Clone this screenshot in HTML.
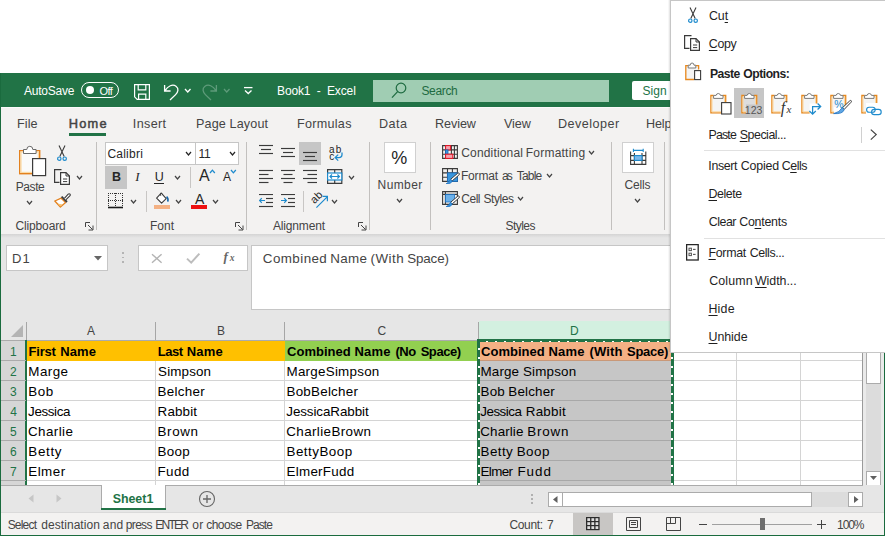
<!DOCTYPE html>
<html lang="en"><head><meta charset="utf-8"><title>Book1 - Excel</title><style>
html,body{margin:0;padding:0;background:#fff;}
body{width:885px;height:536px;overflow:hidden;position:relative;font-family:"Liberation Sans",sans-serif;}
#win,#menu{position:absolute;left:0;top:0;width:885px;height:536px;overflow:hidden;}
div,svg,.t{position:absolute;}
.t{white-space:pre;color:#444;}
u{text-decoration:underline;text-underline-offset:1.5px;text-decoration-thickness:1px;}
</style></head><body>
<div id="win">
<div class="titlebar" style="left:0px;top:73px;width:885px;height:34px;background:#217346;"></div>
<div class="ribbon" style="left:1px;top:107px;width:884px;height:127px;background:#f3f2f1;"></div>
<div style="left:1px;top:107px;width:884px;height:1px;background:#fafafa;"></div>
<div class="fbar" style="left:1px;top:234px;width:884px;height:86px;background:#e6e6e6;"></div>
<div style="left:1px;top:234px;width:884px;height:4px;background:linear-gradient(#d4d4d4,#e6e6e6);"></div>
<span class="t" style="left:23.98px;top:84px;font-size:12px;line-height:14px;letter-spacing:-0.211px;color:#fff;">AutoSave</span>
<div style="left:81px;top:82px;width:38px;height:16px;border:1px solid #fff;border-radius:9px;box-sizing:border-box;"></div>
<div style="left:85.5px;top:86px;width:8px;height:8px;background:#fff;border-radius:50%;"></div>
<span class="t" style="left:99.48px;top:85px;font-size:11px;line-height:12px;letter-spacing:-0.582px;color:#fff;">Off</span>
<span class="t" style="left:277.02px;top:84px;font-size:12px;line-height:14px;letter-spacing:-0.137px;color:#fff;">Book1  -  Excel</span>
<div class="search" style="left:373px;top:80px;width:236px;height:22px;background:#a0cdb3;"></div>
<span class="t" style="left:421.46px;top:84px;font-size:12px;line-height:14px;letter-spacing:-0.339px;color:#1e6b41;">Search</span>
<div style="left:632px;top:81px;width:40px;height:19px;background:#fff;border-radius:2px;"></div>
<span class="t" style="left:642.46px;top:84px;font-size:12px;line-height:14px;letter-spacing:0.102px;color:#217346;">Sign</span>
<svg style="left:134px;top:84px" width="16" height="16" viewBox="0 0 16 16"><path d="M0.6 0.6H15.4V15.4H3.2L0.6 12.8ZM4.2 0.6V5.8H11.8V0.6M4.6 15.4V10.2H11.8V15.4" fill="none" stroke="#fff" stroke-width="1.2"/></svg>
<svg style="left:163px;top:83px" width="17" height="18" viewBox="0 0 17 18"><path d="M1.6 2V8H7.6M2 7.6C5 3 9.5 0.8 13 3.2C16.2 5.6 15 9.2 12.6 11.6L7 17" fill="none" stroke="#fff" stroke-width="1.3"/></svg>
<svg style="left:184px;top:88px" width="7.5" height="5" viewBox="0 0 7.5 5"><path d="M1 1 L3.75 4 L6.5 1" fill="none" stroke="#fff" stroke-width="1.3"/></svg>
<svg style="left:201px;top:83px" width="17" height="18" viewBox="0 0 17 18"><path d="M15.4 2V8H9.4M15 7.6C12 3 7.5 0.8 4 3.2C0.8 5.6 2 9.2 4.4 11.6L10 17" fill="none" stroke="#5e9b7a" stroke-width="1.3"/></svg>
<svg style="left:223px;top:88px" width="7.5" height="5" viewBox="0 0 7.5 5"><path d="M1 1 L3.75 4 L6.5 1" fill="none" stroke="#5e9b7a" stroke-width="1.3"/></svg>
<svg style="left:243px;top:86px" width="11" height="9" viewBox="0 0 11 9"><path d="M1 1.6H9.5" stroke="#fff" stroke-width="1.3"/><path d="M2 4.6L5.25 7.6L8.5 4.6" fill="none" stroke="#fff" stroke-width="1.3"/></svg>
<svg style="left:391px;top:82px" width="16" height="17" viewBox="0 0 16 17"><circle cx="10" cy="6" r="4.8" fill="none" stroke="#1e6b41" stroke-width="1.2"/><path d="M6.6 9.6L1 15.6" stroke="#1e6b41" stroke-width="1.3"/></svg>
<span class="t" style="left:16.97px;top:117px;font-size:12.6px;line-height:14px;letter-spacing:0.097px;">File</span>
<span class="t" style="left:68.65px;top:116px;font-size:12.8px;line-height:15px;letter-spacing:1.258px;-webkit-text-stroke:0.5px #444;">Home</span>
<div style="left:69px;top:133px;width:37px;height:3px;background:#217346;"></div>
<span class="t" style="left:132.84px;top:117px;font-size:12.6px;line-height:14px;letter-spacing:0.349px;">Insert</span>
<span class="t" style="left:195.97px;top:117px;font-size:12.6px;line-height:14px;letter-spacing:0.137px;">Page Layout</span>
<span class="t" style="left:296.97px;top:117px;font-size:12.6px;line-height:14px;letter-spacing:0.283px;">Formulas</span>
<span class="t" style="left:378.97px;top:117px;font-size:12.6px;line-height:14px;letter-spacing:0.473px;">Data</span>
<span class="t" style="left:434.97px;top:117px;font-size:12.6px;line-height:14px;letter-spacing:-0.062px;">Review</span>
<span class="t" style="left:503.94px;top:117px;font-size:12.6px;line-height:14px;letter-spacing:-0.095px;">View</span>
<span class="t" style="left:557.97px;top:117px;font-size:12.6px;line-height:14px;letter-spacing:0.476px;">Developer</span>
<span class="t" style="left:645.97px;top:117px;font-size:12.6px;line-height:14px;letter-spacing:-0.117px;">Help</span>
<div style="left:96px;top:142px;width:1px;height:88px;background:#c2c0be;"></div>
<div style="left:246px;top:142px;width:1px;height:88px;background:#c2c0be;"></div>
<div style="left:369px;top:142px;width:1px;height:88px;background:#c2c0be;"></div>
<div style="left:430px;top:142px;width:1px;height:88px;background:#c2c0be;"></div>
<div style="left:611px;top:142px;width:1px;height:88px;background:#c2c0be;"></div>
<div style="left:664px;top:142px;width:1px;height:88px;background:#c2c0be;"></div>
<span class="t" style="left:15.39px;top:219px;font-size:12px;line-height:14px;letter-spacing:-0.123px;">Clipboard</span>
<span class="t" style="left:150.02px;top:219px;font-size:12px;line-height:14px;letter-spacing:0.020px;">Font</span>
<span class="t" style="left:272.98px;top:219px;font-size:12px;line-height:14px;letter-spacing:-0.156px;">Alignment</span>
<span class="t" style="left:505.46px;top:219px;font-size:12px;line-height:14px;letter-spacing:-0.540px;">Styles</span>
<svg style="left:85px;top:222px" width="9" height="9" viewBox="0 0 9 9"><path d="M0.5 5V0.5H5M3 3L7.5 7.5M8 3.5V8H3.5" fill="none" stroke="#444" stroke-width="1"/></svg>
<svg style="left:235px;top:222px" width="9" height="9" viewBox="0 0 9 9"><path d="M0.5 5V0.5H5M3 3L7.5 7.5M8 3.5V8H3.5" fill="none" stroke="#444" stroke-width="1"/></svg>
<svg style="left:358px;top:222px" width="9" height="9" viewBox="0 0 9 9"><path d="M0.5 5V0.5H5M3 3L7.5 7.5M8 3.5V8H3.5" fill="none" stroke="#444" stroke-width="1"/></svg>
<span class="t" style="left:15.82px;top:180px;font-size:12px;line-height:14px;letter-spacing:-0.442px;">Paste</span>
<svg style="left:26px;top:200px" width="7" height="5" viewBox="0 0 7 5"><path d="M1 1 L3.5 4 L6 1" fill="none" stroke="#444" stroke-width="1.2"/></svg>
<svg style="left:76px;top:175px" width="7" height="5" viewBox="0 0 7 5"><path d="M1 1 L3.5 4 L6 1" fill="none" stroke="#444" stroke-width="1.2"/></svg>
<div style="left:105px;top:142px;width:91px;height:23px;background:#fff;border:1px solid #c6c6c6;box-sizing:border-box;"></div>
<div style="left:195px;top:142px;width:44px;height:23px;background:#fff;border:1px solid #c6c6c6;box-sizing:border-box;"></div>
<span class="t" style="left:107.39px;top:147px;font-size:12px;line-height:14px;letter-spacing:0.235px;color:#262626;">Calibri</span>
<span class="t" style="left:198.59px;top:147px;font-size:12px;line-height:14px;letter-spacing:-0.348px;color:#262626;">11</span>
<svg style="left:185px;top:151px" width="7" height="5" viewBox="0 0 7 5"><path d="M1 1 L3.5 4 L6 1" fill="none" stroke="#262626" stroke-width="1.2"/></svg>
<svg style="left:229px;top:151px" width="7" height="5" viewBox="0 0 7 5"><path d="M1 1 L3.5 4 L6 1" fill="none" stroke="#262626" stroke-width="1.2"/></svg>
<div style="left:105px;top:166px;width:22px;height:23px;background:#c6c6c6;"></div>
<span class="t" style="left:111.96px;top:170px;font-size:12.5px;line-height:14px;font-weight:700;color:#262626;">B</span>
<span class="t" style="left:135.25px;top:169px;font-size:13px;line-height:15px;font-style:italic;color:#262626;font-family:'Liberation Serif',serif;">I</span>
<span class="t" style="left:154.74px;top:170px;font-size:12.5px;line-height:14px;color:#262626;">U</span>
<div style="left:154px;top:183px;width:10px;height:1px;background:#262626;"></div>
<svg style="left:174px;top:175px" width="7" height="5" viewBox="0 0 7 5"><path d="M1 1 L3.5 4 L6 1" fill="none" stroke="#444" stroke-width="1.2"/></svg>
<div style="left:190px;top:167px;width:1px;height:21px;background:#c8c6c4;"></div>
<div style="left:146px;top:191px;width:1px;height:21px;background:#c8c6c4;"></div>
<div style="left:303px;top:191px;width:1px;height:21px;background:#c8c6c4;"></div>
<svg style="left:130px;top:199px" width="7" height="5" viewBox="0 0 7 5"><path d="M1 1 L3.5 4 L6 1" fill="none" stroke="#444" stroke-width="1.2"/></svg>
<svg style="left:175px;top:199px" width="7" height="5" viewBox="0 0 7 5"><path d="M1 1 L3.5 4 L6 1" fill="none" stroke="#444" stroke-width="1.2"/></svg>
<svg style="left:212px;top:199px" width="7" height="5" viewBox="0 0 7 5"><path d="M1 1 L3.5 4 L6 1" fill="none" stroke="#444" stroke-width="1.2"/></svg>
<div style="left:154px;top:205px;width:16px;height:4px;background:#f4b183;"></div>
<div style="left:191px;top:205px;width:16px;height:4px;background:#ee1111;"></div>
<div style="left:299px;top:142px;width:22px;height:23px;background:#c6c6c6;"></div>
<svg style="left:348px;top:175px" width="7" height="5" viewBox="0 0 7 5"><path d="M1 1 L3.5 4 L6 1" fill="none" stroke="#444" stroke-width="1.2"/></svg>
<svg style="left:331px;top:199px" width="7" height="5" viewBox="0 0 7 5"><path d="M1 1 L3.5 4 L6 1" fill="none" stroke="#444" stroke-width="1.2"/></svg>
<div style="left:384px;top:142px;width:32px;height:31px;background:#fff;border:1px solid #d0d0d0;box-sizing:border-box;"></div>
<span class="t" style="left:391.36px;top:148px;font-size:18px;line-height:20px;color:#262626;">%</span>
<span class="t" style="left:377.62px;top:178px;font-size:12px;line-height:14px;letter-spacing:0.381px;">Number</span>
<svg style="left:396px;top:198px" width="7" height="5" viewBox="0 0 7 5"><path d="M1 1 L3.5 4 L6 1" fill="none" stroke="#444" stroke-width="1.2"/></svg>
<span class="tw"><span class="t" style="left:461.29px;top:146px;font-size:12px;line-height:14px;letter-spacing:0.157px;">Conditional</span><span class="t" style="left:525.82px;top:146px;font-size:12px;line-height:14px;letter-spacing:0.212px;">Formatting</span></span>
<span class="tw"><span class="t" style="left:460.92px;top:169px;font-size:12px;line-height:14px;letter-spacing:-0.166px;">Format</span><span class="t" style="left:502.09px;top:169px;font-size:12px;line-height:14px;letter-spacing:-1.930px;">as</span><span class="t" style="left:516.73px;top:169px;font-size:12px;line-height:14px;letter-spacing:-0.804px;">Table</span></span>
<span class="tw"><span class="t" style="left:461.29px;top:192px;font-size:12px;line-height:14px;letter-spacing:-0.487px;">Cell</span><span class="t" style="left:483.46px;top:192px;font-size:12px;line-height:14px;letter-spacing:-0.420px;">Styles</span></span>
<svg style="left:588px;top:150px" width="7" height="5" viewBox="0 0 7 5"><path d="M1 1 L3.5 4 L6 1" fill="none" stroke="#444" stroke-width="1.2"/></svg>
<svg style="left:546px;top:173px" width="7" height="5" viewBox="0 0 7 5"><path d="M1 1 L3.5 4 L6 1" fill="none" stroke="#444" stroke-width="1.2"/></svg>
<svg style="left:517px;top:196px" width="7" height="5" viewBox="0 0 7 5"><path d="M1 1 L3.5 4 L6 1" fill="none" stroke="#444" stroke-width="1.2"/></svg>
<div style="left:622px;top:142px;width:32px;height:31px;background:#fff;border:1px solid #d0d0d0;box-sizing:border-box;"></div>
<span class="t" style="left:624.39px;top:178px;font-size:12px;line-height:14px;letter-spacing:-0.157px;">Cells</span>
<svg style="left:634px;top:198px" width="7" height="5" viewBox="0 0 7 5"><path d="M1 1 L3.5 4 L6 1" fill="none" stroke="#444" stroke-width="1.2"/></svg>
<svg style="left:18px;top:145px" width="30" height="32" viewBox="0 0 30 32"><rect x="1.7" y="5.7" width="20" height="23" fill="#fafafa" stroke="#e3811e" stroke-width="1.4"/><rect x="3" y="7" width="17.4" height="20.4" fill="none" stroke="#fbd9a3" stroke-width="1.2"/><path d="M5.5 8.5V4.5H8.8A3 3.2 0 0 1 14.8 4.5H18.1V8.5Z" fill="#fff" stroke="#6a6a6a" stroke-width="1"/><rect x="14.6" y="13.6" width="13" height="17" fill="#fff" stroke="#3b3b3b" stroke-width="1.2"/></svg>
<svg style="left:56px;top:145px" width="12" height="17" viewBox="0 0 12 17"><path d="M3 0.5L8.2 11.6M9 0.5L3.8 11.6" stroke="#3b3b3b" stroke-width="1.1" fill="none"/><circle cx="3.3" cy="13.7" r="1.7" fill="none" stroke="#1e8bcd" stroke-width="1.2"/><circle cx="8.7" cy="13.7" r="1.7" fill="none" stroke="#1e8bcd" stroke-width="1.2"/></svg>
<svg style="left:54px;top:169px" width="17" height="16" viewBox="0 0 17 16"><path d="M7.5 0.6H0.6V13.4H5.5" fill="none" stroke="#3b3b3b" stroke-width="1.2"/><path d="M6.6 3.6H12L15.4 7V15.4H6.6Z" fill="#fff" stroke="#3b3b3b" stroke-width="1.2"/><path d="M12 3.6V7H15.4M9 10H13.2M9 12.6H13.2" fill="none" stroke="#3b3b3b" stroke-width="1"/></svg>
<svg style="left:54px;top:192px" width="17" height="16" viewBox="0 0 17 16"><path d="M7.2 6.2L11.6 10.6L6.4 15L0.8 9Z" fill="#fff" stroke="#e3811e" stroke-width="1.3" stroke-linejoin="round"/><path d="M3.5 11.5L6.4 14.4L8.6 12.4Z" fill="#f9c470"/><path d="M7.6 4.6L13 10" stroke="#3b3b3b" stroke-width="1.8"/><path d="M10.4 6.4L14.2 2.2Q15.2 1.2 16 2.2Q16.6 3 15.8 3.8L11.8 7.8" fill="#fff" stroke="#3b3b3b" stroke-width="1.1"/></svg>
<span class="t" style="left:198.97px;top:167px;font-size:16px;line-height:17px;color:#262626;">A</span>
<svg style="left:209px;top:169px" width="7" height="5" viewBox="0 0 7 5"><path d="M1 4L3.4 1.2L5.8 4" fill="none" stroke="#1e8bcd" stroke-width="1.3"/></svg>
<span class="t" style="left:222.98px;top:170px;font-size:12px;line-height:14px;color:#262626;">A</span>
<svg style="left:230px;top:169px" width="7" height="5" viewBox="0 0 7 5"><path d="M1 1L3.4 3.8L5.8 1" fill="none" stroke="#1e8bcd" stroke-width="1.3"/></svg>
<svg style="left:108px;top:192px" width="16" height="17" viewBox="0 0 16 17"><path d="M0 1.5H15M0 8.5H15M0.5 1V15M7.5 1V15M14.5 1V15" fill="none" stroke="#333" stroke-width="1" stroke-dasharray="1 1" shape-rendering="crispEdges"/><path d="M0 15.5H15" stroke="#1a1a1a" stroke-width="1.6"/></svg>
<svg style="left:155px;top:192px" width="15" height="13" viewBox="0 0 15 13"><path d="M6.2 1.2L1.6 6.2L6.6 11.2L11.2 6.6L7.4 2.4Q6.6 0.6 5.6 1.4Q4.8 2.2 6 3.6" fill="#fff" stroke="#3b3b3b" stroke-width="1.1" stroke-linejoin="round"/><path d="M11.6 4.6Q13.6 6.4 12.8 9.6" fill="none" stroke="#1565a8" stroke-width="1.6"/></svg>
<span class="t" style="left:194.97px;top:190.5px;font-size:14px;line-height:16px;color:#262626;">A</span>
<svg style="left:259px;top:144px" width="14" height="11" viewBox="0 0 14 11"><path d="M0 1.5H14" stroke="#3b3b3b" stroke-width="1.15"/><path d="M2 5.5H12" stroke="#3b3b3b" stroke-width="1.15"/><path d="M0 9.5H14" stroke="#3b3b3b" stroke-width="1.15"/></svg>
<svg style="left:281px;top:147px" width="14" height="11" viewBox="0 0 14 11"><path d="M0 1.5H14" stroke="#3b3b3b" stroke-width="1.15"/><path d="M2 5.5H12" stroke="#3b3b3b" stroke-width="1.15"/><path d="M0 9.5H14" stroke="#3b3b3b" stroke-width="1.15"/></svg>
<svg style="left:303px;top:151px" width="14" height="11" viewBox="0 0 14 11"><path d="M0 1.5H14" stroke="#3b3b3b" stroke-width="1.15"/><path d="M2 5.5H12" stroke="#3b3b3b" stroke-width="1.15"/><path d="M0 9.5H14" stroke="#3b3b3b" stroke-width="1.15"/></svg>
<svg style="left:259px;top:169px" width="14" height="15" viewBox="0 0 14 15"><path d="M0 1.5H14" stroke="#3b3b3b" stroke-width="1.15"/><path d="M0 5.5H9.5" stroke="#3b3b3b" stroke-width="1.15"/><path d="M0 9.5H14" stroke="#3b3b3b" stroke-width="1.15"/><path d="M0 13.5H9.5" stroke="#3b3b3b" stroke-width="1.15"/></svg>
<svg style="left:281px;top:169px" width="14" height="15" viewBox="0 0 14 15"><path d="M0 1.5H14" stroke="#3b3b3b" stroke-width="1.15"/><path d="M2.5 5.5H11.5" stroke="#3b3b3b" stroke-width="1.15"/><path d="M0 9.5H14" stroke="#3b3b3b" stroke-width="1.15"/><path d="M2.5 13.5H11.5" stroke="#3b3b3b" stroke-width="1.15"/></svg>
<svg style="left:303px;top:169px" width="14" height="15" viewBox="0 0 14 15"><path d="M0 1.5H14" stroke="#3b3b3b" stroke-width="1.15"/><path d="M4.5 5.5H14" stroke="#3b3b3b" stroke-width="1.15"/><path d="M0 9.5H14" stroke="#3b3b3b" stroke-width="1.15"/><path d="M4.5 13.5H14" stroke="#3b3b3b" stroke-width="1.15"/></svg>
<span class="t" style="left:328.98px;top:143.6px;font-size:10px;line-height:11px;letter-spacing:1.122px;color:#262626;">ab</span>
<span class="t" style="left:329.18px;top:151.2px;font-size:10px;line-height:11px;color:#262626;">c</span>
<svg style="left:334px;top:152px" width="10" height="10" viewBox="0 0 10 10"><path d="M8 0.5V2.5Q8 5.6 4.8 5.6H1.4M4.2 2.6L1.2 5.6L4.2 8.6" fill="none" stroke="#1e8bcd" stroke-width="1.3"/></svg>
<svg style="left:327px;top:169px" width="16" height="15" viewBox="0 0 16 15"><path d="M0.6 0.6H14.8V14.4H0.6ZM7.7 0.6V4M7.7 11V14.4" fill="none" stroke="#3b3b3b" stroke-width="1.2"/><rect x="0.6" y="4" width="14.2" height="7" fill="#fff" stroke="#1e8bcd" stroke-width="1.2"/><path d="M3 7.5H12.4M5 5.5L3 7.5L5 9.5M10.4 5.5L12.4 7.5L10.4 9.5" fill="none" stroke="#1e8bcd" stroke-width="1.2"/></svg>
<svg style="left:259px;top:194px" width="14" height="14" viewBox="0 0 14 14"><path d="M0 0.5H14" stroke="#3b3b3b" stroke-width="1.15"/><path d="M7 4.5H14" stroke="#3b3b3b" stroke-width="1.15"/><path d="M7 8.5H14" stroke="#3b3b3b" stroke-width="1.15"/><path d="M0 12.5H14" stroke="#3b3b3b" stroke-width="1.15"/><path d="M0.6 6.5H6M2.8 4.1L0.6 6.5L2.8 8.9" fill="none" stroke="#1e8bcd" stroke-width="1.2"/></svg>
<svg style="left:281px;top:194px" width="14" height="14" viewBox="0 0 14 14"><path d="M0 0.5H14" stroke="#3b3b3b" stroke-width="1.15"/><path d="M7 4.5H14" stroke="#3b3b3b" stroke-width="1.15"/><path d="M7 8.5H14" stroke="#3b3b3b" stroke-width="1.15"/><path d="M0 12.5H14" stroke="#3b3b3b" stroke-width="1.15"/><path d="M0 6.5H5.4M3.2 4.1L5.4 6.5L3.2 8.9" fill="none" stroke="#1e8bcd" stroke-width="1.2"/></svg>
<span class="t" style="left:310px;top:191px;font-size:11px;line-height:12px;color:#262626;transform:rotate(-45deg);transform-origin:50% 50%;">ab</span>
<svg style="left:315px;top:195px" width="14" height="14" viewBox="0 0 14 14"><path d="M1.4 12.6L12.2 1.8M7.6 1.4H12.4V6.2" fill="none" stroke="#1e8bcd" stroke-width="1.2"/></svg>
<svg style="left:442px;top:145px" width="16" height="14" viewBox="0 0 16 14"><path d="M0.6 0.6H15.4V13.4H0.6ZM0.6 4.9H15.4M0.6 9.2H15.4M3.6 0.6V13.4M9.4 0.6V13.4M12.4 0.6V13.4" fill="none" stroke="#3b3b3b" stroke-width="1.1"/><rect x="3.6" y="0.6" width="5" height="4.3" fill="#f4a3ae" stroke="#e81123" stroke-width="1"/><rect x="3.6" y="4.9" width="2.4" height="4.3" fill="#3a96dd" stroke="#0f6cbd" stroke-width="0.8"/><rect x="3.6" y="9.2" width="7.2" height="4.2" fill="#f4a3ae" stroke="#e81123" stroke-width="1"/></svg>
<svg style="left:442px;top:168px" width="18" height="16" viewBox="0 0 18 16"><path d="M0.6 0.6H15.4V13.4H0.6ZM0.6 4.9H15.4M0.6 9.2H15.4M5.5 0.6V13.4M10.4 0.6V13.4" fill="none" stroke="#3b3b3b" stroke-width="1.1"/><rect x="5.5" y="4.9" width="9.9" height="8.5" fill="#3a96dd" stroke="#1b6fbf" stroke-width="0.8"/><g transform="translate(0.8,1.3)"><path d="M14.6 4.2Q15.8 3.2 16.4 4Q17 4.8 16 5.8L9.4 11.6L7.8 10Z" fill="#fff" stroke="#3b3b3b" stroke-width="1"/><path d="M7.8 10L9.4 11.6Q8.6 14.6 3.4 14.4Q6.2 13.2 7.8 10Z" fill="#3a96dd" stroke="#1b6fbf" stroke-width="0.8"/></g></svg>
<svg style="left:442px;top:191px" width="18" height="16" viewBox="0 0 18 16"><path d="M0.6 0.6H15.4V13.4H0.6ZM0.6 3.4H15.4M3.4 0.6V13.4" fill="none" stroke="#3b3b3b" stroke-width="1.1"/><rect x="3.4" y="3.4" width="9" height="7.6" fill="#6cb1ea" stroke="#1b6fbf" stroke-width="0.8"/><g transform="translate(0.8,1.3)"><path d="M14.6 4.2Q15.8 3.2 16.4 4Q17 4.8 16 5.8L9.4 11.6L7.8 10Z" fill="#fff" stroke="#3b3b3b" stroke-width="1"/><path d="M7.8 10L9.4 11.6Q8.6 14.6 3.4 14.4Q6.2 13.2 7.8 10Z" fill="#3a96dd" stroke="#1b6fbf" stroke-width="0.8"/></g></svg>
<svg style="left:630px;top:148px" width="17" height="18" viewBox="0 0 17 18"><path d="M3.4 2.4H13.2M3.4 0.8V4M13.2 0.8V4" fill="none" stroke="#1e8bcd" stroke-width="1.1"/><path d="M0.6 3.4V16.4H15.8V3.4M0.6 7.6H15.8M0.6 12.4H15.8M4.4 5V16.4M12 5V16.4" fill="none" stroke="#3b3b3b" stroke-width="1.1"/><rect x="4.4" y="7.6" width="7.6" height="4.8" fill="#7ab8ec" stroke="#1e8bcd" stroke-width="1.1"/></svg>
<div style="left:6px;top:245px;width:102px;height:26px;background:#fff;border:1px solid #c6c6c6;box-sizing:border-box;"></div>
<span class="t" style="left:11.93px;top:251px;font-size:13px;line-height:15px;letter-spacing:1.083px;">D1</span>
<svg style="left:94px;top:256px" width="8" height="5" viewBox="0 0 8 5"><path d="M0 0H8L4 4.5Z" fill="#666"/></svg>
<div style="left:122.2px;top:252.4px;width:2px;height:1.8px;background:#b4b4b4;"></div>
<div style="left:122.2px;top:256.7px;width:2px;height:1.8px;background:#b4b4b4;"></div>
<div style="left:122.2px;top:261px;width:2px;height:1.8px;background:#b4b4b4;"></div>
<div style="left:138px;top:245px;width:110px;height:26px;background:#fff;border:1px solid #c6c6c6;box-sizing:border-box;"></div>
<svg style="left:151px;top:253px" width="12" height="11" viewBox="0 0 12 11"><path d="M1 1.2L10.6 9.8M10.6 1.2L1 9.8" stroke="#b4b4b4" stroke-width="1.4" fill="none"/></svg>
<svg style="left:186px;top:252px" width="15" height="13" viewBox="0 0 15 13"><path d="M1 6.6L5.2 10.6L13.4 1.6" stroke="#bdbdbd" stroke-width="2" fill="none"/></svg>
<span class="t" style="left:223.60px;top:248.5px;font-size:13px;line-height:15px;font-weight:700;font-style:italic;color:#666;font-family:'Liberation Serif',serif;">f</span>
<span class="t" style="left:229.72px;top:252.8px;font-size:9.5px;line-height:10px;font-weight:700;font-style:italic;color:#666;font-family:'Liberation Serif',serif;">x</span>
<div style="left:251px;top:245px;width:634px;height:65px;background:#fff;border:1px solid #c6c6c6;box-sizing:border-box;"></div>
<span class="tw"><span class="t" style="left:262.82px;top:251px;font-size:13.4px;line-height:15px;letter-spacing:0.424px;">Combined</span><span class="t" style="left:330.20px;top:251px;font-size:13.4px;line-height:15px;letter-spacing:0.317px;">Name</span><span class="t" style="left:370.47px;top:251px;font-size:13.4px;line-height:15px;letter-spacing:0.510px;">(With</span><span class="t" style="left:407.29px;top:251px;font-size:13.4px;line-height:15px;letter-spacing:-0.164px;">Space)</span></span>
<div style="left:1px;top:320px;width:884px;height:20px;background:#e6e6e6;"></div>
<div style="left:479px;top:321px;width:192px;height:19px;background:#d3f0e0;"></div>
<div style="left:1px;top:340px;width:884px;height:1px;background:#ababab;"></div>
<svg style="left:11px;top:325px" width="13" height="13" viewBox="0 0 13 13"><path d="M12 0V12H0Z" fill="#b4b4b4"/></svg>
<div style="left:26px;top:322px;width:1px;height:18px;background:#a6a6a6;"></div>
<div style="left:155px;top:322px;width:1px;height:18px;background:#a6a6a6;"></div>
<div style="left:284px;top:322px;width:1px;height:18px;background:#a6a6a6;"></div>
<div style="left:478px;top:322px;width:1px;height:18px;background:#a6a6a6;"></div>
<span class="t" style="left:86.88px;top:324px;font-size:12px;line-height:14px;">A</span>
<span class="t" style="left:217.02px;top:324px;font-size:12px;line-height:14px;">B</span>
<span class="t" style="left:377.39px;top:324px;font-size:12px;line-height:14px;">C</span>
<span class="t" style="left:570.02px;top:324px;font-size:12px;line-height:14px;color:#217346;">D</span>
<div style="left:27px;top:341px;width:836px;height:144px;background:#fff;"></div>
<div style="left:1px;top:341px;width:25px;height:144px;background:#d6d6d6;"></div>
<div style="left:25px;top:340px;width:2px;height:145px;background:#217346;"></div>
<div style="left:27px;top:341px;width:258px;height:20px;background:#ffc000;"></div>
<div style="left:285px;top:341px;width:192px;height:20px;background:#92d050;"></div>
<div style="left:480px;top:342px;width:191px;height:143px;background:#c6c6c6;"></div>
<div style="left:480px;top:342px;width:191px;height:18px;background:#f4b084;"></div>
<div style="left:480px;top:360px;width:191px;height:1px;background:#c99878;"></div>
<div style="left:1px;top:360px;width:25px;height:1px;background:#ababab;"></div>
<div style="left:674px;top:360px;width:189px;height:1px;background:#d4d4d4;"></div>
<div style="left:1px;top:380px;width:25px;height:1px;background:#ababab;"></div>
<div style="left:27px;top:380px;width:452px;height:1px;background:#d4d4d4;"></div>
<div style="left:480px;top:380px;width:191px;height:1px;background:#a8a8a8;"></div>
<div style="left:674px;top:380px;width:189px;height:1px;background:#d4d4d4;"></div>
<div style="left:1px;top:400px;width:25px;height:1px;background:#ababab;"></div>
<div style="left:27px;top:400px;width:452px;height:1px;background:#d4d4d4;"></div>
<div style="left:480px;top:400px;width:191px;height:1px;background:#a8a8a8;"></div>
<div style="left:674px;top:400px;width:189px;height:1px;background:#d4d4d4;"></div>
<div style="left:1px;top:420px;width:25px;height:1px;background:#ababab;"></div>
<div style="left:27px;top:420px;width:452px;height:1px;background:#d4d4d4;"></div>
<div style="left:480px;top:420px;width:191px;height:1px;background:#a8a8a8;"></div>
<div style="left:674px;top:420px;width:189px;height:1px;background:#d4d4d4;"></div>
<div style="left:1px;top:440px;width:25px;height:1px;background:#ababab;"></div>
<div style="left:27px;top:440px;width:452px;height:1px;background:#d4d4d4;"></div>
<div style="left:480px;top:440px;width:191px;height:1px;background:#a8a8a8;"></div>
<div style="left:674px;top:440px;width:189px;height:1px;background:#d4d4d4;"></div>
<div style="left:1px;top:460px;width:25px;height:1px;background:#ababab;"></div>
<div style="left:27px;top:460px;width:452px;height:1px;background:#d4d4d4;"></div>
<div style="left:480px;top:460px;width:191px;height:1px;background:#a8a8a8;"></div>
<div style="left:674px;top:460px;width:189px;height:1px;background:#d4d4d4;"></div>
<div style="left:1px;top:480px;width:25px;height:1px;background:#ababab;"></div>
<div style="left:27px;top:480px;width:452px;height:1px;background:#d4d4d4;"></div>
<div style="left:480px;top:480px;width:191px;height:1px;background:#a8a8a8;"></div>
<div style="left:674px;top:480px;width:189px;height:1px;background:#d4d4d4;"></div>
<div style="left:155px;top:361px;width:1px;height:124px;background:#d4d4d4;"></div>
<div style="left:284px;top:361px;width:1px;height:124px;background:#d4d4d4;"></div>
<div style="left:736px;top:341px;width:1px;height:144px;background:#d4d4d4;"></div>
<div style="left:800px;top:341px;width:1px;height:144px;background:#d4d4d4;"></div>
<div style="left:862px;top:341px;width:1px;height:144px;background:#9a9a9a;"></div>
<div style="left:477px;top:339px;width:3px;height:146px;background:#217346;"></div>
<div style="left:671px;top:339px;width:3px;height:146px;background:#217346;"></div>
<div style="left:477px;top:339px;width:197px;height:3px;background:#217346;"></div>
<div style="left:478.4px;top:348.4px;width:1.8px;height:1.5px;background:#fff;"></div>
<div style="left:478.4px;top:357.4px;width:1.8px;height:1.5px;background:#fff;"></div>
<div style="left:478.4px;top:366.4px;width:1.8px;height:1.5px;background:#fff;"></div>
<div style="left:478.4px;top:375.4px;width:1.8px;height:1.5px;background:#fff;"></div>
<div style="left:478.4px;top:384.4px;width:1.8px;height:1.5px;background:#fff;"></div>
<div style="left:478.4px;top:393.4px;width:1.8px;height:1.5px;background:#fff;"></div>
<div style="left:478.4px;top:402.4px;width:1.8px;height:1.5px;background:#fff;"></div>
<div style="left:478.4px;top:411.4px;width:1.8px;height:1.5px;background:#fff;"></div>
<div style="left:478.4px;top:420.4px;width:1.8px;height:1.5px;background:#fff;"></div>
<div style="left:478.4px;top:429.4px;width:1.8px;height:1.5px;background:#fff;"></div>
<div style="left:478.4px;top:438.4px;width:1.8px;height:1.5px;background:#fff;"></div>
<div style="left:478.4px;top:447.4px;width:1.8px;height:1.5px;background:#fff;"></div>
<div style="left:478.4px;top:456.4px;width:1.8px;height:1.5px;background:#fff;"></div>
<div style="left:478.4px;top:465.4px;width:1.8px;height:1.5px;background:#fff;"></div>
<div style="left:478.4px;top:474.4px;width:1.8px;height:1.5px;background:#fff;"></div>
<div style="left:478.4px;top:483.4px;width:1.8px;height:1.5px;background:#fff;"></div>
<div style="left:670.8px;top:357.4px;width:1.8px;height:1.5px;background:#fff;"></div>
<div style="left:670.8px;top:366.4px;width:1.8px;height:1.5px;background:#fff;"></div>
<div style="left:670.8px;top:375.4px;width:1.8px;height:1.5px;background:#fff;"></div>
<div style="left:670.8px;top:384.4px;width:1.8px;height:1.5px;background:#fff;"></div>
<div style="left:670.8px;top:393.4px;width:1.8px;height:1.5px;background:#fff;"></div>
<div style="left:670.8px;top:402.4px;width:1.8px;height:1.5px;background:#fff;"></div>
<div style="left:670.8px;top:411.4px;width:1.8px;height:1.5px;background:#fff;"></div>
<div style="left:670.8px;top:420.4px;width:1.8px;height:1.5px;background:#fff;"></div>
<div style="left:670.8px;top:429.4px;width:1.8px;height:1.5px;background:#fff;"></div>
<div style="left:670.8px;top:438.4px;width:1.8px;height:1.5px;background:#fff;"></div>
<div style="left:670.8px;top:447.4px;width:1.8px;height:1.5px;background:#fff;"></div>
<div style="left:670.8px;top:456.4px;width:1.8px;height:1.5px;background:#fff;"></div>
<div style="left:670.8px;top:465.4px;width:1.8px;height:1.5px;background:#fff;"></div>
<div style="left:670.8px;top:474.4px;width:1.8px;height:1.5px;background:#fff;"></div>
<div style="left:670.8px;top:483.4px;width:1.8px;height:1.5px;background:#fff;"></div>
<div style="left:486px;top:340.7px;width:2px;height:1.4px;background:#fff;"></div>
<div style="left:495px;top:340.7px;width:2px;height:1.4px;background:#fff;"></div>
<div style="left:504px;top:340.7px;width:2px;height:1.4px;background:#fff;"></div>
<div style="left:513px;top:340.7px;width:2px;height:1.4px;background:#fff;"></div>
<div style="left:522px;top:340.7px;width:2px;height:1.4px;background:#fff;"></div>
<div style="left:531px;top:340.7px;width:2px;height:1.4px;background:#fff;"></div>
<div style="left:540px;top:340.7px;width:2px;height:1.4px;background:#fff;"></div>
<div style="left:549px;top:340.7px;width:2px;height:1.4px;background:#fff;"></div>
<div style="left:558px;top:340.7px;width:2px;height:1.4px;background:#fff;"></div>
<div style="left:567px;top:340.7px;width:2px;height:1.4px;background:#fff;"></div>
<div style="left:576px;top:340.7px;width:2px;height:1.4px;background:#fff;"></div>
<div style="left:585px;top:340.7px;width:2px;height:1.4px;background:#fff;"></div>
<div style="left:594px;top:340.7px;width:2px;height:1.4px;background:#fff;"></div>
<div style="left:603px;top:340.7px;width:2px;height:1.4px;background:#fff;"></div>
<div style="left:612px;top:340.7px;width:2px;height:1.4px;background:#fff;"></div>
<div style="left:621px;top:340.7px;width:2px;height:1.4px;background:#fff;"></div>
<div style="left:630px;top:340.7px;width:2px;height:1.4px;background:#fff;"></div>
<div style="left:639px;top:340.7px;width:2px;height:1.4px;background:#fff;"></div>
<div style="left:648px;top:340.7px;width:2px;height:1.4px;background:#fff;"></div>
<div style="left:657px;top:340.7px;width:2px;height:1.4px;background:#fff;"></div>
<div style="left:666px;top:340.7px;width:2px;height:1.4px;background:#fff;"></div>
<span class="t" style="left:10.09px;top:345px;font-size:12px;line-height:14px;color:#217346;">1</span>
<span class="t" style="left:9.90px;top:365px;font-size:12px;line-height:14px;color:#217346;">2</span>
<span class="t" style="left:10.04px;top:385px;font-size:12px;line-height:14px;color:#217346;">3</span>
<span class="t" style="left:10.22px;top:405px;font-size:12px;line-height:14px;color:#217346;">4</span>
<span class="t" style="left:10.02px;top:425px;font-size:12px;line-height:14px;color:#217346;">5</span>
<span class="t" style="left:9.89px;top:445px;font-size:12px;line-height:14px;color:#217346;">6</span>
<span class="t" style="left:9.88px;top:465px;font-size:12px;line-height:14px;color:#217346;">7</span>
<span class="tw"><span class="t" style="left:28.53px;top:344px;font-size:13px;line-height:15px;letter-spacing:-0.186px;font-weight:700;color:#000;">First</span><span class="t" style="left:60.13px;top:344px;font-size:13px;line-height:15px;letter-spacing:0.169px;font-weight:700;color:#000;">Name</span></span>
<span class="tw"><span class="t" style="left:157.83px;top:344px;font-size:13px;line-height:15px;letter-spacing:-0.467px;font-weight:700;color:#000;">Last</span><span class="t" style="left:186.73px;top:344px;font-size:13px;line-height:15px;letter-spacing:0.169px;font-weight:700;color:#000;">Name</span></span>
<span class="tw"><span class="t" style="left:287.07px;top:344px;font-size:13px;line-height:15px;letter-spacing:0.005px;font-weight:700;color:#000;">Combined</span><span class="t" style="left:354.53px;top:344px;font-size:13px;line-height:15px;letter-spacing:0.169px;font-weight:700;color:#000;">Name</span><span class="t" style="left:395.45px;top:344px;font-size:13px;line-height:15px;letter-spacing:-0.401px;font-weight:700;color:#000;">(No</span><span class="t" style="left:420.63px;top:344px;font-size:13px;line-height:15px;letter-spacing:-0.422px;font-weight:700;color:#000;">Space)</span></span>
<span class="tw"><span class="t" style="left:481.07px;top:344px;font-size:13px;line-height:15px;letter-spacing:0.005px;font-weight:700;color:#000;">Combined</span><span class="t" style="left:548.53px;top:344px;font-size:13px;line-height:15px;letter-spacing:0.169px;font-weight:700;color:#000;">Name</span><span class="t" style="left:589.45px;top:344px;font-size:13px;line-height:15px;letter-spacing:0.168px;font-weight:700;color:#000;">(With</span><span class="t" style="left:627.03px;top:344px;font-size:13px;line-height:15px;letter-spacing:-0.282px;font-weight:700;color:#000;">Space)</span></span>
<span class="tw"><span class="t" style="left:28.30px;top:364px;font-size:13.4px;line-height:15px;letter-spacing:0.428px;color:#000;">Marge</span></span>
<span class="tw"><span class="t" style="left:158.09px;top:364px;font-size:13.4px;line-height:15px;letter-spacing:0.141px;color:#000;">Simpson</span></span>
<span class="tw"><span class="t" style="left:286.50px;top:364px;font-size:13.4px;line-height:15px;letter-spacing:0.250px;color:#000;">MargeSimpson</span></span>
<span class="tw"><span class="t" style="left:480.50px;top:364px;font-size:13.4px;line-height:15px;letter-spacing:0.153px;color:#000;">Marge</span><span class="t" style="left:522.89px;top:364px;font-size:13.4px;line-height:15px;letter-spacing:0.207px;color:#000;">Simpson</span></span>
<span class="tw"><span class="t" style="left:28.30px;top:384px;font-size:13.4px;line-height:15px;letter-spacing:0.560px;color:#000;">Bob</span></span>
<span class="tw"><span class="t" style="left:157.60px;top:384px;font-size:13.4px;line-height:15px;letter-spacing:0.281px;color:#000;">Belcher</span></span>
<span class="tw"><span class="t" style="left:286.50px;top:384px;font-size:13.4px;line-height:15px;letter-spacing:0.238px;color:#000;">BobBelcher</span></span>
<span class="tw"><span class="t" style="left:480.50px;top:384px;font-size:13.4px;line-height:15px;letter-spacing:0.210px;color:#000;">Bob</span><span class="t" style="left:508.30px;top:384px;font-size:13.4px;line-height:15px;letter-spacing:0.181px;color:#000;">Belcher</span></span>
<span class="tw"><span class="t" style="left:28.09px;top:404px;font-size:13.4px;line-height:15px;letter-spacing:-0.379px;color:#000;">Jessica</span></span>
<span class="tw"><span class="t" style="left:157.60px;top:404px;font-size:13.4px;line-height:15px;letter-spacing:0.153px;color:#000;">Rabbit</span></span>
<span class="tw"><span class="t" style="left:286.29px;top:404px;font-size:13.4px;line-height:15px;letter-spacing:-0.084px;color:#000;">JessicaRabbit</span></span>
<span class="tw"><span class="t" style="left:480.29px;top:404px;font-size:13.4px;line-height:15px;letter-spacing:-0.512px;color:#000;">Jessica</span><span class="t" style="left:525.70px;top:404px;font-size:13.4px;line-height:15px;letter-spacing:0.273px;color:#000;">Rabbit</span></span>
<span class="tw"><span class="t" style="left:28.02px;top:424px;font-size:13.4px;line-height:15px;letter-spacing:0.404px;color:#000;">Charlie</span></span>
<span class="tw"><span class="t" style="left:157.60px;top:424px;font-size:13.4px;line-height:15px;letter-spacing:0.572px;color:#000;">Brown</span></span>
<span class="tw"><span class="t" style="left:286.32px;top:424px;font-size:13.4px;line-height:15px;letter-spacing:0.383px;color:#000;">CharlieBrown</span></span>
<span class="tw"><span class="t" style="left:480.32px;top:424px;font-size:13.4px;line-height:15px;letter-spacing:0.104px;color:#000;">Charlie</span><span class="t" style="left:527.30px;top:424px;font-size:13.4px;line-height:15px;letter-spacing:0.772px;color:#000;">Brown</span></span>
<span class="tw"><span class="t" style="left:28.30px;top:444px;font-size:13.4px;line-height:15px;letter-spacing:0.672px;color:#000;">Betty</span></span>
<span class="tw"><span class="t" style="left:157.60px;top:444px;font-size:13.4px;line-height:15px;letter-spacing:0.289px;color:#000;">Boop</span></span>
<span class="tw"><span class="t" style="left:286.50px;top:444px;font-size:13.4px;line-height:15px;letter-spacing:0.479px;color:#000;">BettyBoop</span></span>
<span class="tw"><span class="t" style="left:480.50px;top:444px;font-size:13.4px;line-height:15px;letter-spacing:0.447px;color:#000;">Betty</span><span class="t" style="left:516.70px;top:444px;font-size:13.4px;line-height:15px;letter-spacing:0.456px;color:#000;">Boop</span></span>
<span class="tw"><span class="t" style="left:28.30px;top:464px;font-size:13.4px;line-height:15px;letter-spacing:0.457px;color:#000;">Elmer</span></span>
<span class="tw"><span class="t" style="left:157.60px;top:464px;font-size:13.4px;line-height:15px;letter-spacing:0.340px;color:#000;">Fudd</span></span>
<span class="tw"><span class="t" style="left:286.50px;top:464px;font-size:13.4px;line-height:15px;letter-spacing:0.279px;color:#000;">ElmerFudd</span></span>
<span class="tw"><span class="t" style="left:480.50px;top:464px;font-size:13.4px;line-height:15px;letter-spacing:-0.618px;color:#000;">Elmer</span><span class="t" style="left:517.40px;top:464px;font-size:13.4px;line-height:15px;letter-spacing:1.007px;color:#000;">Fudd</span></span>
<div style="left:1px;top:485px;width:884px;height:27px;background:#e6e6e6;"></div>
<div style="left:1px;top:485px;width:100px;height:1px;background:#ababab;"></div>
<div style="left:166px;top:485px;width:697px;height:1px;background:#ababab;"></div>
<div style="left:101px;top:485px;width:65px;height:24px;background:#fff;border-left:1px solid #ababab;border-right:1px solid #ababab;box-sizing:border-box;"></div>
<div style="left:101px;top:508px;width:65px;height:2px;background:#217346;"></div>
<span class="t" style="left:112.64px;top:492px;font-size:12.4px;line-height:14px;letter-spacing:0.008px;font-weight:700;color:#217346;">Sheet1</span>
<svg style="left:28px;top:494px" width="6" height="9" viewBox="0 0 6 9"><path d="M5.5 0.5V8.5L0.5 4.5Z" fill="#c6c6c6"/></svg>
<svg style="left:56px;top:494px" width="6" height="9" viewBox="0 0 6 9"><path d="M0.5 0.5V8.5L5.5 4.5Z" fill="#c6c6c6"/></svg>
<svg style="left:198px;top:490px" width="18" height="18" viewBox="0 0 18 18"><circle cx="9" cy="9" r="7.5" fill="none" stroke="#666" stroke-width="1.1"/><path d="M9 5V13M5 9H13" stroke="#666" stroke-width="1.3"/></svg>
<div style="left:863px;top:341px;width:21px;height:144px;background:#eaeaea;"></div>
<div style="left:866px;top:341px;width:15px;height:130px;background:#dcdcdc;"></div>
<div style="left:866px;top:341px;width:15px;height:43px;background:#fff;border:1px solid #ababab;border-top:0;box-sizing:border-box;"></div>
<div style="left:866px;top:471px;width:15px;height:15px;background:#fff;border:1px solid #ababab;box-sizing:border-box;"></div>
<svg style="left:870px;top:476px" width="8" height="5" viewBox="0 0 8 5"><path d="M0 0H7L3.5 4Z" fill="#606060"/></svg>
<div style="left:864px;top:485px;width:20px;height:27px;background:#e6e6e6;"></div>
<div style="left:531px;top:494.4px;width:2px;height:1.8px;background:#b0b0b0;"></div>
<div style="left:531px;top:498.4px;width:2px;height:1.8px;background:#b0b0b0;"></div>
<div style="left:531px;top:502.4px;width:2px;height:1.8px;background:#b0b0b0;"></div>
<div style="left:548px;top:492px;width:315px;height:15px;background:#dcdcdc;"></div>
<div style="left:548px;top:492px;width:15px;height:15px;background:#fff;border:1px solid #ababab;box-sizing:border-box;"></div>
<svg style="left:553px;top:496px" width="5" height="8" viewBox="0 0 5 8"><path d="M4.5 0V7L0 3.5Z" fill="#606060"/></svg>
<div style="left:562px;top:492px;width:250px;height:15px;background:#fff;border:1px solid #ababab;box-sizing:border-box;"></div>
<div style="left:848px;top:492px;width:15px;height:15px;background:#fff;border:1px solid #ababab;box-sizing:border-box;"></div>
<svg style="left:854px;top:496px" width="5" height="8" viewBox="0 0 5 8"><path d="M0 0V7L4.5 3.5Z" fill="#606060"/></svg>
<div style="left:1px;top:512px;width:884px;height:23px;background:#f3f2f1;"></div>
<div style="left:1px;top:512px;width:884px;height:1px;background:#dadada;"></div>
<span class="tw"><span class="t" style="left:7.66px;top:518px;font-size:12px;line-height:14px;letter-spacing:-0.804px;">Select</span><span class="t" style="left:41.30px;top:518px;font-size:12px;line-height:14px;letter-spacing:0.054px;">destination</span><span class="t" style="left:102.69px;top:518px;font-size:12px;line-height:14px;letter-spacing:0.281px;">and</span><span class="t" style="left:125.83px;top:518px;font-size:12px;line-height:14px;letter-spacing:-0.684px;">press</span><span class="t" style="left:155.22px;top:518px;font-size:12px;line-height:14px;letter-spacing:-1.732px;">ENTER</span><span class="t" style="left:192.20px;top:518px;font-size:12px;line-height:14px;letter-spacing:0.333px;">or</span><span class="t" style="left:206.19px;top:518px;font-size:12px;line-height:14px;letter-spacing:-0.550px;">choose</span><span class="t" style="left:246.02px;top:518px;font-size:12px;line-height:14px;letter-spacing:-0.942px;">Paste</span></span>
<span class="tw"><span class="t" style="left:509.39px;top:518px;font-size:12px;line-height:14px;letter-spacing:-0.330px;">Count:</span><span class="t" style="left:546.88px;top:518px;font-size:12px;line-height:14px;">7</span></span>
<div style="left:573px;top:513px;width:40px;height:22px;background:#c8c6c4;"></div>
<svg style="left:586px;top:517px" width="14" height="14" viewBox="0 0 14 14"><rect x="0" y="0" width="13.6" height="13.2" fill="#2b2b2b"/><rect x="1.3" y="1.2" width="2.8" height="2.8" fill="#dedede"/><rect x="1.3" y="5.2" width="2.8" height="2.8" fill="#dedede"/><rect x="1.3" y="9.2" width="2.8" height="2.8" fill="#dedede"/><rect x="5.3999999999999995" y="1.2" width="2.8" height="2.8" fill="#dedede"/><rect x="5.3999999999999995" y="5.2" width="2.8" height="2.8" fill="#dedede"/><rect x="5.3999999999999995" y="9.2" width="2.8" height="2.8" fill="#dedede"/><rect x="9.5" y="1.2" width="2.8" height="2.8" fill="#dedede"/><rect x="9.5" y="5.2" width="2.8" height="2.8" fill="#dedede"/><rect x="9.5" y="9.2" width="2.8" height="2.8" fill="#dedede"/></svg>
<svg style="left:626px;top:517px" width="15" height="14" viewBox="0 0 15 14"><path d="M0.5 0.5H14.5V13.5H0.5ZM3.5 3.5H11.5V10.5H3.5ZM5 5.5H10M5 7.5H10" fill="none" stroke="#444" stroke-width="1"/></svg>
<svg style="left:666px;top:517px" width="15" height="14" viewBox="0 0 15 14"><path d="M0.5 0.5H14.5V13.5H0.5ZM4.5 0.5V6.5M0.5 6.5H9.5V0.5" fill="none" stroke="#444" stroke-width="1"/></svg>
<div style="left:699px;top:524px;width:8px;height:1px;background:#444;"></div>
<div style="left:712px;top:524px;width:100px;height:1px;background:#a0a0a0;"></div>
<div style="left:760px;top:518px;width:5px;height:12px;background:#6e6e6e;"></div>
<div style="left:817px;top:524px;width:9px;height:1px;background:#444;"></div>
<div style="left:821px;top:520px;width:1px;height:9px;background:#444;"></div>
<span class="t" style="left:837.09px;top:518px;font-size:12px;line-height:14px;letter-spacing:-1.117px;">100%</span>
<div style="left:0px;top:73px;width:1.2px;height:463px;background:#1a6b3e;"></div>
<div style="left:883.7px;top:73px;width:1.3px;height:463px;background:#1a6b3e;"></div>
<div style="left:0px;top:534.9px;width:885px;height:1.1px;background:#1a6b3e;"></div>
</div>
<div id="menu">
<div style="left:668px;top:0px;width:2px;height:352px;background:linear-gradient(90deg,rgba(0,0,0,0),rgba(0,0,0,.12));"></div>
<div style="left:670px;top:0px;width:215px;height:353px;background:#fff;border:1px solid #c6c6c6;border-right:0;box-sizing:border-box;"></div>
<div style="left:704px;top:150px;width:181px;height:1px;background:#e1e1e1;"></div>
<div style="left:704px;top:237.5px;width:181px;height:1px;background:#e1e1e1;"></div>
<span class="t" style="left:709.07px;top:9px;font-size:12.4px;line-height:14px;letter-spacing:-0.138px;color:#1f1f1f;">Cu<u>t</u></span>
<span class="t" style="left:708.87px;top:37px;font-size:12.4px;line-height:14px;letter-spacing:-0.365px;color:#1f1f1f;"><u>C</u>opy</span>
<span class="tw"><span class="t" style="left:709.88px;top:67px;font-size:12.2px;line-height:14px;letter-spacing:-0.556px;font-weight:700;color:#1f1f1f;">Paste</span><span class="t" style="left:743.30px;top:67px;font-size:12.2px;line-height:14px;letter-spacing:-0.510px;font-weight:700;color:#1f1f1f;">Options:</span></span>
<div style="left:734px;top:88px;width:30px;height:30px;background:#c6c6c6;"></div>
<span class="tw"><span class="t" style="left:708.48px;top:128px;font-size:12.4px;line-height:14px;letter-spacing:-0.835px;color:#1f1f1f;">Paste</span><span class="t" style="left:739.74px;top:128px;font-size:12.4px;line-height:14px;letter-spacing:-0.468px;color:#1f1f1f;"><u>S</u>pecial...</span></span>
<div style="left:861px;top:127px;width:1px;height:16px;background:#d0d0d0;"></div>
<svg style="left:869px;top:128px" width="9" height="13" viewBox="0 0 9 13"><path d="M1.8 1.6L7.2 6.6L1.8 11.6" fill="none" stroke="#444" stroke-width="1.2"/></svg>
<span class="tw"><span class="t" style="left:708.36px;top:159px;font-size:12.4px;line-height:14px;letter-spacing:-0.395px;color:#1f1f1f;">Insert</span><span class="t" style="left:740.77px;top:159px;font-size:12.4px;line-height:14px;letter-spacing:-0.173px;color:#1f1f1f;">Copied</span><span class="t" style="left:781.67px;top:159px;font-size:12.4px;line-height:14px;letter-spacing:-0.421px;color:#1f1f1f;">C<u>e</u>lls</span></span>
<span class="t" style="left:708.48px;top:187px;font-size:12.4px;line-height:14px;letter-spacing:-0.435px;color:#1f1f1f;"><u>D</u>elete</span>
<span class="tw"><span class="t" style="left:708.87px;top:215px;font-size:12.4px;line-height:14px;letter-spacing:-0.499px;color:#1f1f1f;">Clear</span><span class="t" style="left:739.17px;top:215px;font-size:12.4px;line-height:14px;letter-spacing:-0.222px;color:#1f1f1f;">Co<u>n</u>tents</span></span>
<span class="tw"><span class="t" style="left:708.48px;top:246px;font-size:12.4px;line-height:14px;letter-spacing:-0.293px;color:#1f1f1f;"><u>F</u>ormat</span><span class="t" style="left:749.87px;top:246px;font-size:12.4px;line-height:14px;letter-spacing:-0.448px;color:#1f1f1f;">Cells...</span></span>
<span class="tw"><span class="t" style="left:709.17px;top:274px;font-size:12.4px;line-height:14px;letter-spacing:0.181px;color:#1f1f1f;">Column</span><span class="t" style="left:754.95px;top:274px;font-size:12.4px;line-height:14px;letter-spacing:-0.035px;color:#1f1f1f;"><u>W</u>idth...</span></span>
<span class="t" style="left:708.48px;top:302px;font-size:12.4px;line-height:14px;letter-spacing:0.189px;color:#1f1f1f;"><u>H</u>ide</span>
<span class="t" style="left:708.54px;top:330px;font-size:12.4px;line-height:14px;letter-spacing:-0.057px;color:#1f1f1f;"><u>U</u>nhide</span>
<svg style="left:687px;top:7px" width="12" height="17" viewBox="0 0 12 17"><path d="M3 0.5L8.2 11.6M9 0.5L3.8 11.6" stroke="#3b3b3b" stroke-width="1.1" fill="none"/><circle cx="3.3" cy="13.7" r="1.7" fill="none" stroke="#1e8bcd" stroke-width="1.2"/><circle cx="8.7" cy="13.7" r="1.7" fill="none" stroke="#1e8bcd" stroke-width="1.2"/></svg>
<svg style="left:684px;top:35px" width="17" height="17" viewBox="0 0 17 17"><path d="M7.5 0.6H0.6V13.4H5.5" fill="none" stroke="#3b3b3b" stroke-width="1.2"/><path d="M6.6 3.6H12L15.4 7V15.4H6.6Z" fill="#fff" stroke="#3b3b3b" stroke-width="1.2"/><path d="M12 3.6V7H15.4M9 10H13.2M9 12.6H13.2" fill="none" stroke="#3b3b3b" stroke-width="1"/></svg>
<svg style="left:685px;top:62px" width="17" height="19" viewBox="0 0 17 19"><path d="M9 18H0.3V3H14.2V8H9Z" fill="#f4f4f4"/><path d="M9 17.5H0.8V3.6H3.2M10.6 3.6H13.6V7.6" fill="none" stroke="#e8881c" stroke-width="1.3"/><path d="M3.2 6V3.2H5.2A1.9 2.2 0 0 1 9 3.2H10.8V6Z" fill="#fff" stroke="#7a7a7a" stroke-width="1"/><rect x="9.6" y="8.6" width="6" height="9" fill="#fff" stroke="#3b3b3b" stroke-width="1.1"/></svg>
<svg style="left:710px;top:92px" width="24" height="24" viewBox="0 0 24 24"><path d="M11 21.4H0.4V3H16.2V10.6H11Z" fill="rgba(236,236,236,0.6)"/><path d="M11 20.9H0.9V3.5H3.6M13 3.5H15.7V10.6" fill="none" stroke="#e8881c" stroke-width="1.3"/><path d="M11 19.8H2V4.6H3.6M13 4.6H14.6V10.6" fill="none" stroke="#fbd59b" stroke-width="1"/><path d="M3.6 6.4V3.4H6.1A2.25 2.4 0 0 1 10.5 3.4H13V6.4Z" fill="#fff" stroke="#7a7a7a" stroke-width="1"/><rect x="11.6" y="10.6" width="9.4" height="11.4" fill="#fff" stroke="#3b3b3b" stroke-width="1.1"/></svg>
<svg style="left:741px;top:92px" width="24" height="24" viewBox="0 0 24 24"><path d="M5 21.4H0.4V3H16.2V12.6H5Z" fill="rgba(236,236,236,0.6)"/><path d="M5 20.9H0.9V3.5H3.6M13 3.5H15.7V12.6" fill="none" stroke="#e8881c" stroke-width="1.3"/><path d="M5 19.8H2V4.6H3.6M13 4.6H14.6V12.6" fill="none" stroke="#fbd59b" stroke-width="1"/><path d="M3.6 6.4V3.4H6.1A2.25 2.4 0 0 1 10.5 3.4H13V6.4Z" fill="#fff" stroke="#7a7a7a" stroke-width="1"/></svg>
<span class="t" style="left:744.80px;top:104px;font-size:10.5px;line-height:12px;letter-spacing:0.071px;color:#555;">123</span>
<svg style="left:771px;top:92px" width="24" height="24" viewBox="0 0 24 24"><path d="M9.6 21.4H0.4V3H16.2V10H9.6Z" fill="rgba(236,236,236,0.6)"/><path d="M9.6 20.9H0.9V3.5H3.6M13 3.5H15.7V10" fill="none" stroke="#e8881c" stroke-width="1.3"/><path d="M9.6 19.8H2V4.6H3.6M13 4.6H14.6V10" fill="none" stroke="#fbd59b" stroke-width="1"/><path d="M3.6 6.4V3.4H6.1A2.25 2.4 0 0 1 10.5 3.4H13V6.4Z" fill="#fff" stroke="#7a7a7a" stroke-width="1"/></svg>
<span class="t" style="left:780.82px;top:98.5px;font-size:16px;line-height:17px;font-style:italic;color:#333;font-family:'Liberation Serif',serif;">f</span>
<span class="t" style="left:786.53px;top:102.5px;font-size:11px;line-height:12px;font-style:italic;color:#333;font-family:'Liberation Serif',serif;">x</span>
<svg style="left:801px;top:92px" width="24" height="24" viewBox="0 0 24 24"><path d="M8.6 21.4H0.4V3H16.2V11.4H8.6Z" fill="rgba(236,236,236,0.6)"/><path d="M8.6 20.9H0.9V3.5H3.6M13 3.5H15.7V11.4" fill="none" stroke="#e8881c" stroke-width="1.3"/><path d="M8.6 19.8H2V4.6H3.6M13 4.6H14.6V11.4" fill="none" stroke="#fbd59b" stroke-width="1"/><path d="M3.6 6.4V3.4H6.1A2.25 2.4 0 0 1 10.5 3.4H13V6.4Z" fill="#fff" stroke="#7a7a7a" stroke-width="1"/><path d="M11.6 22V14.5H19.6M16.6 11.5L19.7 14.5L16.6 17.5M8.4 19L11.6 22.2L14.8 19" fill="none" stroke="#1e8bcd" stroke-width="1.25"/></svg>
<svg style="left:830px;top:92px" width="24" height="24" viewBox="0 0 24 24"><path d="M4 21.4H0.4V3H16.2V15H4Z" fill="rgba(236,236,236,0.6)"/><path d="M4 20.9H0.9V3.5H3.6M13 3.5H15.7V15" fill="none" stroke="#e8881c" stroke-width="1.3"/><path d="M4 19.8H2V4.6H3.6M13 4.6H14.6V15" fill="none" stroke="#fbd59b" stroke-width="1"/><path d="M3.6 6.4V3.4H6.1A2.25 2.4 0 0 1 10.5 3.4H13V6.4Z" fill="#fff" stroke="#7a7a7a" stroke-width="1"/><path d="M19.6 9Q20.6 8 21.2 8.7Q21.8 9.4 21 10.3L14.2 17.4L12.4 15.8Z" fill="#fff" stroke="#3b3b3b" stroke-width="1"/><path d="M12.2 15.6L14.2 17.6Q13 22.2 3.6 21.6Q9.6 20.4 12.2 15.6Z" fill="#5ea6e4" stroke="#1b6fbf" stroke-width="0.8"/></svg>
<span class="t" style="left:834.23px;top:98px;font-size:10.5px;line-height:12px;color:#1e8bcd;">%</span>
<svg style="left:861px;top:92px" width="24" height="24" viewBox="0 0 24 24"><path d="M5 21.4H0.4V3H16.2V11H5Z" fill="rgba(236,236,236,0.6)"/><path d="M5 20.9H0.9V3.5H3.6M13 3.5H15.7V11" fill="none" stroke="#e8881c" stroke-width="1.3"/><path d="M5 19.8H2V4.6H3.6M13 4.6H14.6V11" fill="none" stroke="#fbd59b" stroke-width="1"/><path d="M3.6 6.4V3.4H6.1A2.25 2.4 0 0 1 10.5 3.4H13V6.4Z" fill="#fff" stroke="#7a7a7a" stroke-width="1"/><rect x="5.6" y="15.2" width="8.6" height="5" rx="2.5" fill="none" stroke="#1e8bcd" stroke-width="1.15"/><rect x="10.6" y="17.4" width="9.6" height="5.2" rx="2.6" fill="none" stroke="#1e8bcd" stroke-width="1.15"/></svg>
<svg style="left:686px;top:244px" width="13" height="17" viewBox="0 0 13 17"><rect x="0.6" y="0.6" width="11.6" height="15.4" fill="#fff" stroke="#262626" stroke-width="1.3"/><rect x="3" y="4.2" width="2.4" height="2.4" fill="none" stroke="#555" stroke-width="1"/><path d="M7 5.4H9.6" stroke="#555" stroke-width="1.1"/><rect x="3" y="9.2" width="2.4" height="2.4" fill="none" stroke="#555" stroke-width="1"/><path d="M7 10.4H9.6" stroke="#555" stroke-width="1.1"/></svg>
</div>
</body></html>
